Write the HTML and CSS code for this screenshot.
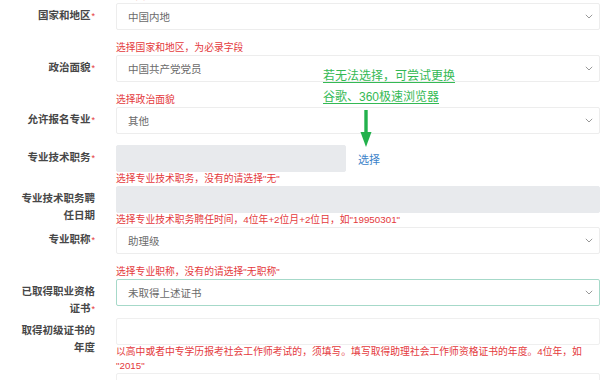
FILE: index.html
```html
<!DOCTYPE html>
<html lang="zh-CN">
<head>
<meta charset="utf-8">
<link rel="stylesheet" href="styles.css">
</head>
<body>
<div class="page">
  <div class="form">
    <div class="row">
      <div class="lbl"></div>
      <div class="field"><div class="help">选择国籍</div></div>
    </div>

    <div class="row">
      <div class="lbl">国家和地区<i>*</i></div>
      <div class="field">
        <div class="select"><span>中国内地</span><svg class="chev" viewBox="0 0 8 5" width="8" height="5"><path d="M0.8 0.8 L4 4 L7.2 0.8" fill="none" stroke="#999" stroke-width="1"/></svg></div>
        <div class="help">选择国家和地区，为必录字段</div>
      </div>
    </div>

    <div class="row">
      <div class="lbl">政治面貌<i>*</i></div>
      <div class="field">
        <div class="select"><span>中国共产党党员</span><svg class="chev" viewBox="0 0 8 5" width="8" height="5"><path d="M0.8 0.8 L4 4 L7.2 0.8" fill="none" stroke="#999" stroke-width="1"/></svg></div>
        <div class="help">选择政治面貌</div>
      </div>
    </div>

    <div class="row">
      <div class="lbl">允许报名专业<i>*</i></div>
      <div class="field">
        <div class="select"><span>其他</span><svg class="chev" viewBox="0 0 8 5" width="8" height="5"><path d="M0.8 0.8 L4 4 L7.2 0.8" fill="none" stroke="#999" stroke-width="1"/></svg></div>
      </div>
    </div>

    <div class="row">
      <div class="lbl">专业技术职务<i>*</i></div>
      <div class="field">
        <div class="pick">
          <div class="input gray short"></div>
          <a class="link">选择</a>
        </div>
        <div class="help">选择专业技术职务，没有的请选择"无"</div>
      </div>
    </div>

    <div class="row">
      <div class="lbl">专业技术职务聘任日期</div>
      <div class="field">
        <div class="input gray"></div>
        <div class="help">选择专业技术职务聘任时间，4位年+2位月+2位日，如"19950301"</div>
      </div>
    </div>

    <div class="row">
      <div class="lbl">专业职称<i>*</i></div>
      <div class="field">
        <div class="select"><span>助理级</span><svg class="chev" viewBox="0 0 8 5" width="8" height="5"><path d="M0.8 0.8 L4 4 L7.2 0.8" fill="none" stroke="#999" stroke-width="1"/></svg></div>
        <div class="help">选择专业职称，没有的请选择"无职称"</div>
      </div>
    </div>

    <div class="row">
      <div class="lbl">已取得职业资格证书<i>*</i></div>
      <div class="field">
        <div class="select focus"><span>未取得上述证书</span><svg class="chev" viewBox="0 0 8 5" width="8" height="5"><path d="M0.8 0.8 L4 4 L7.2 0.8" fill="none" stroke="#999" stroke-width="1"/></svg></div>
      </div>
    </div>

    <div class="row">
      <div class="lbl">取得初级证书的年度</div>
      <div class="field">
        <div class="input"></div>
        <div class="help">以高中或者中专学历报考社会工作师考试的，须填写。填写取得助理社会工作师资格证书的年度。4位年，如<br>"2015"</div>
      </div>
    </div>

    <div class="row">
      <div class="lbl"></div>
      <div class="field">
        <div class="input"></div>
      </div>
    </div>
  </div>

  <div class="note">
    <p>若无法选择，可尝试更换</p>
    <p>谷歌、360极速浏览器</p>
  </div>
  <svg class="arrow" viewBox="0 0 12 38" width="12" height="38">
    <rect x="4.3" y="0" width="3.4" height="24" fill="#22b14c"/>
    <path d="M0.5 22 L11.5 22 L6 37 Z" fill="#22b14c"/>
  </svg>
</div>
</body>
</html>
```

FILE: styles.css
```css
html, body {
  margin: 0;
  padding: 0;
  background: #fff;
}

.page {
  position: relative;
  width: 614px;
  height: 380px;
  overflow: hidden;
  font-family: "Liberation Sans", "Noto Sans CJK SC", sans-serif;
}

.form {
  margin-top: -11px;
}

.row {
  display: grid;
  grid-template-columns: 95px 484px;
  column-gap: 21px;
  align-items: start;
}

.lbl {
  justify-self: end;
  max-width: 78px;
  text-align: right;
  padding-top: 4px;
  font-size: 10.5px;
  line-height: 17px;
  font-weight: bold;
  color: #474747;
}

.lbl i {
  font-style: normal;
  color: #e4393c;
  font-weight: normal;
  font-size: 9px;
  margin-left: 1px;
}

.field {
  display: flex;
  flex-direction: column;
}

.select {
  box-sizing: border-box;
  height: 27px;
  border: 1px solid #ededed;
  border-radius: 2px;
  margin-bottom: 11px;
  padding: 0 6px 0 11px;
  display: flex;
  align-items: center;
  justify-content: space-between;
  font-size: 10.5px;
  color: #6b6b6b;
}

.select.focus {
  border-color: #a6d9c9;
}

.chev {
  display: block;
}

.input {
  box-sizing: border-box;
  height: 27px;
  border: 1px solid #efefef;
  border-radius: 2px;
}

.input.gray {
  background: #e8eaed;
  border-color: #e8eaed;
}

.pick {
  display: flex;
  align-items: center;
  gap: 12px;
}

.input.short {
  width: 230px;
}

.link {
  font-size: 11px;
  color: #3b82c9;
  line-height: 16px;
  margin-top: 2px;
}

.help {
  font-size: 9.8px;
  line-height: 14px;
  color: #e4393c;
}

.note {
  position: absolute;
  left: 323px;
  top: 66px;
  color: #34b954;
  font-size: 12px;
  line-height: 21px;
}

.note p {
  margin: 0;
  text-decoration: underline;
  text-underline-offset: 2px;
}

.arrow {
  position: absolute;
  left: 360px;
  top: 110px;
}
```
